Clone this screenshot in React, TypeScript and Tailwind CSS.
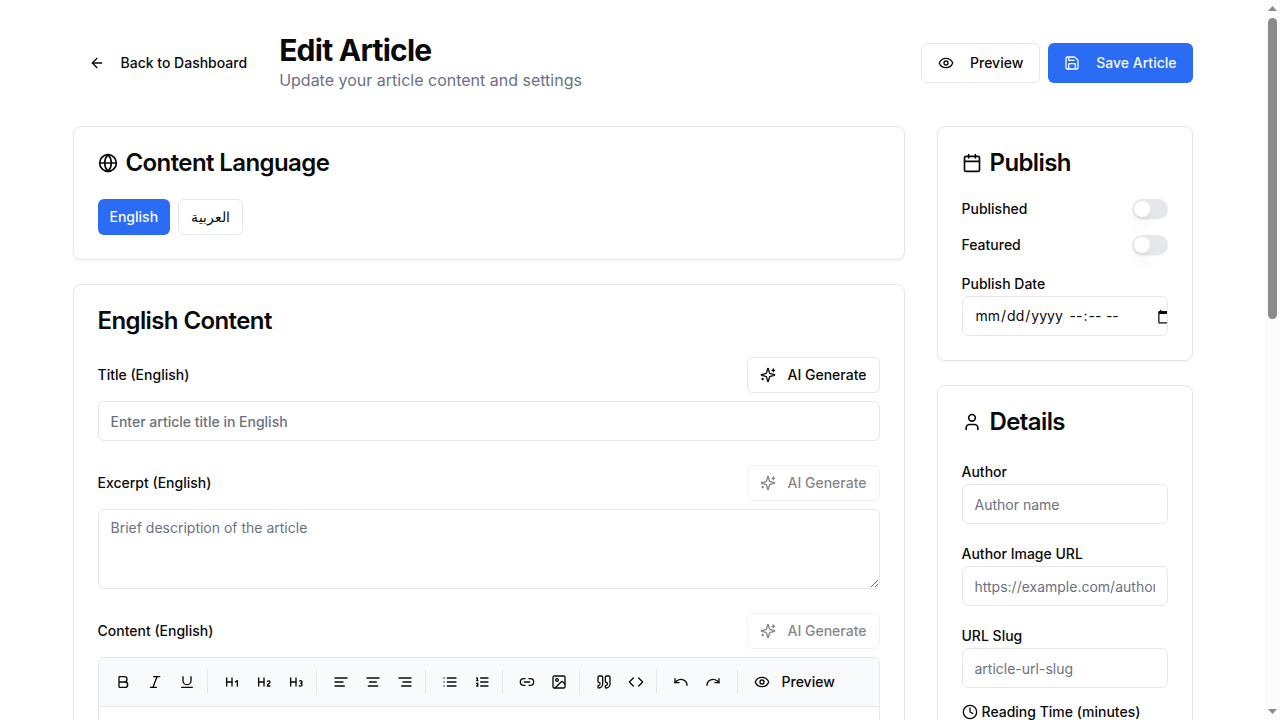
import { useState } from "react";
import type { ComponentType, ReactNode } from "react";
import {
  ArrowLeft, Bold, Calendar, Clock, Code, Eye, Globe, Heading1, Heading2, Heading3, Image,
  Italic, Link2, Quote, Redo, Save, Underline, Undo, User,
} from "lucide-react";

type Icon = ComponentType<{ className?: string }>;

function strokeIcon(d: string): Icon {
  return function StrokeIcon({ className }) {
    return (
      <svg
        viewBox="0 0 24 24"
        fill="none"
        stroke="currentColor"
        strokeWidth="2"
        strokeLinecap="round"
        strokeLinejoin="round"
        aria-hidden="true"
        className={className}
      >
        <path d={d} />
      </svg>
    );
  };
}

const AlignLeft = strokeIcon("M21 6H3M15 12H3M17 18H3");
const AlignCenter = strokeIcon("M21 6H3M17 12H7M19 18H5");
const AlignRight = strokeIcon("M21 6H3M21 12H9M21 18H7");
const List = strokeIcon("M8 6h13M8 12h13M8 18h13M3 6h.01M3 12h.01M3 18h.01");
const ListOrdered = strokeIcon("M10 6h11M10 12h11M10 18h11M4 6h1v4M4 10h2M6 18H4c0-1 2-2 2-3s-1-1.5-2-1");
const Sparkles = strokeIcon(
  "M9.937 15.5A2 2 0 0 0 8.5 14.063l-6.135-1.582a.5.5 0 0 1 0-.962L8.5 9.936A2 2 0 0 0 9.937 8.5l1.582-6.135a.5.5 0 0 1 .963 0L14.063 8.5A2 2 0 0 0 15.5 9.937l6.135 1.581a.5.5 0 0 1 0 .964L15.5 14.063a2 2 0 0 0-1.437 1.437l-1.582 6.135a.5.5 0 0 1-.963 0zM20 3v4M22 5h-4M4 17v2M5 18H3",
);

const inputClass =
  "h-10 w-full rounded-md border border-gray-200 bg-white px-3 py-2 text-sm placeholder:text-gray-500";

function Card({ children }: { children: ReactNode }) {
  return <section className="rounded-lg border border-gray-200 bg-white shadow-xs">{children}</section>;
}

function CardTitle({ icon: I, children }: { icon?: Icon; children: ReactNode }) {
  return (
    <h2 className="flex items-center gap-2 p-6 text-2xl leading-6 font-semibold tracking-tight">
      {I && <I className="size-5" />}
      {children}
    </h2>
  );
}

function GenerateButton({ disabled }: { disabled?: boolean }) {
  return (
    <button
      type="button"
      disabled={disabled}
      className="flex h-9 items-center gap-3 rounded-md border border-gray-200 bg-white px-3 text-sm font-medium disabled:opacity-50"
    >
      <Sparkles className="size-4" />
      AI Generate
    </button>
  );
}

function FieldHead({ id, label, disabled }: { id: string; label: string; disabled?: boolean }) {
  return (
    <div className="mb-2 flex items-center justify-between">
      <label htmlFor={id} className="text-sm font-medium">{label}</label>
      <GenerateButton disabled={disabled} />
    </div>
  );
}

function Toggle({ id, label }: { id: string; label: string }) {
  const [on, setOn] = useState(false);
  return (
    <div className="flex items-center justify-between">
      <label htmlFor={id} className="text-sm font-medium">{label}</label>
      <button
        id={id}
        type="button"
        role="switch"
        aria-checked={on}
        onClick={() => setOn(!on)}
        className="flex h-5 w-9 items-center rounded-full border-2 border-transparent bg-gray-200 shadow-xs aria-checked:justify-end aria-checked:bg-[#2a6df4]"
      >
        <span className="size-4 rounded-full bg-white shadow-lg" />
      </button>
    </div>
  );
}

function PublishDate() {
  return (
    <div className="leading-[25px]">
      <label htmlFor="date" className="text-sm leading-none font-medium">Publish Date</label>
      <div className="flex h-10 items-center overflow-hidden rounded-md border border-gray-200 bg-white pl-3 text-sm">
        <input
          id="date"
          type="date"
          className="w-[94px] shrink-0 [&::-webkit-calendar-picker-indicator]:hidden"
        />
        <input
          type="time"
          aria-label="Publish time"
          className="w-[88px] shrink-0 [&::-webkit-calendar-picker-indicator]:hidden"
        />
        <button type="button" aria-label="Open calendar" className="shrink-0">
          <svg viewBox="0 0 24 24" fill="currentColor" aria-hidden="true" className="size-[15px]">
            <path d="M20 3h-1V1h-2v2H7V1H5v2H4c-1.1 0-2 .9-2 2v16c0 1.1.9 2 2 2h16c1.1 0 2-.9 2-2V5c0-1.1-.9-2-2-2zm0 18H4V8h16v13z" />
          </svg>
        </button>
      </div>
    </div>
  );
}

function TextField({ id, label, placeholder }: { id: string; label: string; placeholder: string }) {
  return (
    <div>
      <label htmlFor={id} className="text-sm leading-none font-medium">{label}</label>
      <input id={id} type="text" placeholder={placeholder} className={inputClass} />
    </div>
  );
}

const toolGroups: { name: string; icon: Icon }[][] = [
  [{ name: "Bold", icon: Bold }, { name: "Italic", icon: Italic }, { name: "Underline", icon: Underline }],
  [{ name: "Heading 1", icon: Heading1 }, { name: "Heading 2", icon: Heading2 }, { name: "Heading 3", icon: Heading3 }],
  [{ name: "Align left", icon: AlignLeft }, { name: "Align center", icon: AlignCenter }, { name: "Align right", icon: AlignRight }],
  [{ name: "Bullet list", icon: List }, { name: "Numbered list", icon: ListOrdered }],
  [{ name: "Link", icon: Link2 }, { name: "Image", icon: Image }],
  [{ name: "Quote", icon: Quote }, { name: "Code", icon: Code }],
  [{ name: "Undo", icon: Undo }, { name: "Redo", icon: Redo }],
];

function Toolbar() {
  return (
    <div className="flex flex-wrap items-center gap-1 border-b border-gray-200 bg-gray-50 p-2">
      {toolGroups.map((group, i) => (
        <div
          key={group[0].name}
          className={`flex items-center ${i < toolGroups.length - 1 ? "after:mx-1 after:h-6 after:w-px after:bg-gray-200" : ""}`}
        >
          {group.map(({ name, icon: I }) => (
            <button key={name} type="button" aria-label={name} className="flex size-8 items-center justify-center rounded-md">
              <I className="size-4" />
            </button>
          ))}
        </div>
      ))}
      <div className="ml-1 flex items-center gap-1 before:h-6 before:w-px before:bg-gray-200">
        <button type="button" className="flex h-8 items-center gap-3 rounded-md px-3 text-sm font-medium">
          <Eye className="size-4" />
          Preview
        </button>
      </div>
    </div>
  );
}

function ScrollRail() {
  return (
    <div aria-hidden="true" className="sticky top-0 flex h-screen w-[15px] shrink-0 flex-col items-center bg-[#fcfcfc] py-1.5 text-[#8b8b8b]">
      <svg viewBox="0 0 9 5" fill="currentColor" className="h-[5px] w-[9px] shrink-0">
        <path d="M4.5 0L9 5H0z" />
      </svg>
      <div className="my-[7px] flex grow flex-col">
        <div className="h-[44%] w-[9px] rounded-full bg-[#8b8b8b]" />
      </div>
      <svg viewBox="0 0 9 5" fill="currentColor" className="h-[5px] w-[9px] shrink-0">
        <path d="M4.5 5L9 0H0z" />
      </svg>
    </div>
  );
}

export default function App() {
  return (
    <div className="flex min-h-screen items-start bg-white font-[Inter,'Noto_Sans',sans-serif] leading-[26px] text-neutral-950">
      <div className="min-w-0 grow">
        <main className="mx-auto max-w-6xl px-4 py-8">
          <header className="mb-8 flex items-center justify-between">
            <div className="flex items-center gap-4">
              <a href="#dashboard" className="flex h-10 items-center gap-4 px-4 text-sm font-medium">
                <ArrowLeft className="size-4" />
                Back to Dashboard
              </a>
              <div className="pb-0.5">
                <h1 className="text-3xl font-bold tracking-tight">Edit Article</h1>
                <p className="leading-6 text-gray-500">Update your article content and settings</p>
              </div>
            </div>
            <div className="flex gap-2">
              <button type="button" className="flex h-10 items-center gap-4 rounded-md border border-gray-200 bg-white px-4 text-sm font-medium">
                <Eye className="size-4" />
                Preview
              </button>
              <button type="button" className="flex h-10 items-center gap-4 rounded-md bg-[#2a6df4] px-4 text-sm font-medium text-gray-50">
                <Save className="size-4" />
                Save Article
              </button>
            </div>
          </header>

          <div className="grid grid-cols-4 items-start gap-8">
            <div className="col-span-3 flex flex-col gap-6">
              <Card>
                <CardTitle icon={Globe}>Content Language</CardTitle>
                <div className="flex gap-2 px-6 pb-6">
                  <button type="button" className="h-9 rounded-md bg-[#2a6df4] px-3 text-sm font-medium text-gray-50">English</button>
                  <button type="button" lang="ar" className="h-9 rounded-md border border-gray-200 bg-white px-3 text-sm font-medium">العربية</button>
                </div>
              </Card>

              <Card>
                <CardTitle>English Content</CardTitle>
                <div className="flex flex-col gap-6 px-6 pb-6">
                  <div>
                    <FieldHead id="title" label="Title (English)" />
                    <input
                      id="title"
                      type="text"
                      placeholder="Enter article title in English"
                      className="h-10 w-full rounded-md border border-gray-200 bg-white px-3 py-2 text-sm font-medium placeholder:text-gray-500"
                    />
                  </div>
                  <div>
                    <FieldHead id="excerpt" label="Excerpt (English)" disabled />
                    <textarea
                      id="excerpt"
                      placeholder="Brief description of the article"
                      className="block h-20 w-full rounded-md border border-gray-200 px-3 py-2 text-sm placeholder:text-gray-500"
                    />
                  </div>
                  <div>
                    <FieldHead id="content" label="Content (English)" disabled />
                    <div className="overflow-hidden rounded-md border border-gray-200">
                      <Toolbar />
                      <textarea id="content" className="block h-96 w-full resize-none p-4 text-sm" />
                    </div>
                  </div>
                </div>
              </Card>
            </div>

            <aside className="flex flex-col gap-6">
              <Card>
                <CardTitle icon={Calendar}>Publish</CardTitle>
                <div className="flex flex-col gap-4 px-6 pb-6">
                  <Toggle id="published" label="Published" />
                  <Toggle id="featured" label="Featured" />
                  <PublishDate />
                </div>
              </Card>
              <Card>
                <CardTitle icon={User}>Details</CardTitle>
                <div className="flex flex-col gap-4 px-6 pb-6">
                  <TextField id="author" label="Author" placeholder="Author name" />
                  <TextField id="author-image" label="Author Image URL" placeholder="https://example.com/author.jpg" />
                  <TextField id="slug" label="URL Slug" placeholder="article-url-slug" />
                  <div>
                    <label htmlFor="reading" className="flex items-center gap-1 text-sm leading-none font-medium">
                      <Clock className="size-4" />
                      Reading Time (minutes)
                    </label>
                    <input id="reading" type="number" defaultValue={5} className={inputClass} />
                  </div>
                </div>
              </Card>
            </aside>
          </div>
        </main>
      </div>
      <ScrollRail />
    </div>
  );
}
